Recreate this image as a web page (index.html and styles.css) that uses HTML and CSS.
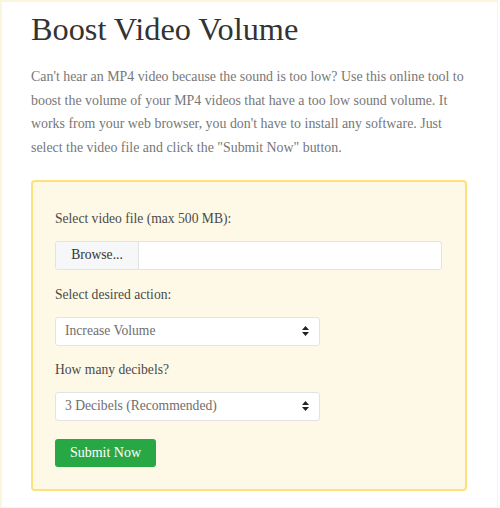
FILE: index.html
```html
<!DOCTYPE html>
<html>
<head>
<meta charset="utf-8">
<link rel="stylesheet" href="styles.css">
</head>
<body>
<div class="frame">
  <h1 class="title">Boost Video Volume</h1>
  <p class="intro">Can't hear an MP4 video because the sound is too low? Use this online tool to boost the volume of your MP4 videos that have a too low sound volume. It works from your web browser, you don't have to install any software. Just select the video file and click the "Submit Now" button.</p>
  <div class="panel">
    <div class="label">Select video file (max 500 MB):</div>
    <div class="file">
      <span class="browse">Browse...</span>
      <span class="filename"></span>
    </div>
    <div class="label">Select desired action:</div>
    <div class="select">
      <span>Increase Volume</span>
      <svg class="arrows" width="7" height="10" viewBox="0 0 7 10"><path d="M3.5 0L7 4H0Z M3.5 10L0 6H7Z" fill="#222"/></svg>
    </div>
    <div class="label">How many decibels?</div>
    <div class="select">
      <span>3 Decibels (Recommended)</span>
      <svg class="arrows" width="7" height="10" viewBox="0 0 7 10"><path d="M3.5 0L7 4H0Z M3.5 10L0 6H7Z" fill="#222"/></svg>
    </div>
    <div class="submit">Submit Now</div>
  </div>
</div>
</body>
</html>
```
FILE: styles.css
```css
html, body {
  margin: 0;
  padding: 0;
  background: #ffffff;
}
body {
  font-family: "Liberation Serif", "DejaVu Serif", serif;
}
.frame {
  width: 498px;
  height: 508px;
  border: 2px solid #faf6dc;
  border-bottom-width: 1px;
  border-right-width: 1px;
  padding: 0 0 0 29px;
  box-sizing: border-box;
  overflow: hidden;
}
.title {
  margin: 9px 0 0 0;
  font-weight: normal;
  font-size: 32.3px;
  line-height: 36px;
  color: #333333;
}
.intro {
  margin: 18px 0 0 0;
  width: 440px;
  font-size: 13.9px;
  line-height: 23.7px;
  color: #777777;
}
.panel {
  margin-top: 20px;
  width: 436px;
  box-sizing: border-box;
  background: #fef9e6;
  border: 2px solid #fde27c;
  border-radius: 4px;
  padding: 27px 22px 22px 22px;
  display: flex;
  flex-direction: column;
  align-items: flex-start;
}
.label {
  font-size: 13.6px;
  line-height: 20px;
  color: #4a4a4a;
  margin-bottom: 12px;
}
.file {
  width: 387px;
  height: 29px;
  display: flex;
  background: #ffffff;
  border: 1px solid #e3e3e3;
  border-radius: 3px;
  box-sizing: border-box;
  margin-bottom: 15px;
  overflow: hidden;
}
.browse {
  width: 82px;
  background: #f6f7f8;
  border-right: 1px solid #e3e3e3;
  font-size: 13.6px;
  color: #333333;
  display: flex;
  align-items: center;
  justify-content: center;
}
.select {
  width: 265px;
  height: 29px;
  box-sizing: border-box;
  background: #ffffff;
  border: 1px solid #e3e3e3;
  border-radius: 3px;
  display: flex;
  align-items: center;
  justify-content: space-between;
  padding: 0 10px 0 9px;
  font-size: 13.6px;
  color: #6e6e6e;
  margin-bottom: 14px;
}
.submit {
  margin-top: 4px;
  width: 101px;
  height: 28px;
  background: #28a745;
  border-radius: 3px;
  color: #ffffff;
  font-size: 14px;
  display: flex;
  align-items: center;
  justify-content: center;
}
```
